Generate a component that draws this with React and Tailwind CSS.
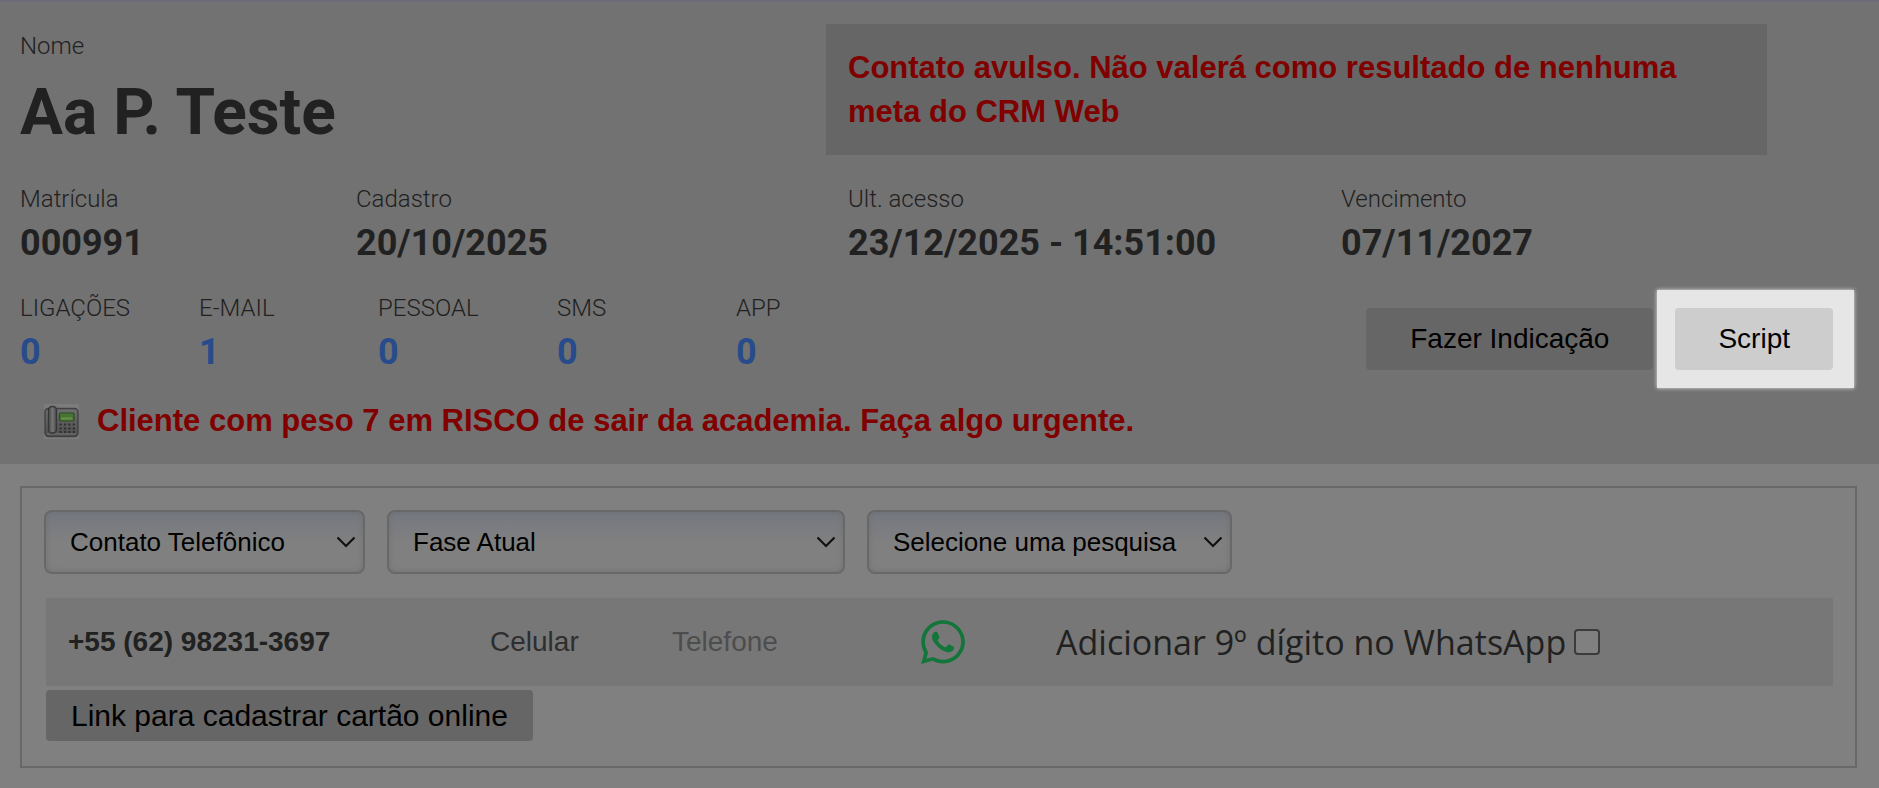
import React from 'react';
import { FaWhatsapp } from 'react-icons/fa';

const DETAILS = [
    { label: 'Matrícula', value: '000991' },
    { label: 'Cadastro', value: '20/10/2025' },
    { label: 'Ult. acesso', value: '23/12/2025 - 14:51:00' },
    { label: 'Vencimento', value: '07/11/2027' },
];

const COUNTERS = [
    { label: 'LIGAÇÕES', value: 0 },
    { label: 'E-MAIL', value: 1 },
    { label: 'PESSOAL', value: 0 },
    { label: 'SMS', value: 0 },
    { label: 'APP', value: 0 },
];

const PhoneIcon = () => (
    <svg viewBox="0 0 35 35" className="h-[35px] w-[35px] shrink-0" aria-hidden="true">
        <defs>
            <linearGradient id="phone-body" x1="0" y1="0" x2="0" y2="1">
                <stop offset="0" stopColor="#6e6e6e" />
                <stop offset="1" stopColor="#4e4e4e" />
            </linearGradient>
            <linearGradient id="phone-handset" x1="0" y1="0" x2="1" y2="0">
                <stop offset="0" stopColor="#4a4a4a" />
                <stop offset="0.5" stopColor="#747474" />
                <stop offset="1" stopColor="#4a4a4a" />
            </linearGradient>
        </defs>
        <rect width="35" height="35" fill="#7c7c7c" />
        <rect x="1" y="4.5" width="33" height="28" rx="3.5" fill="url(#phone-body)" stroke="#404040" strokeWidth="1.4" />
        <path d="M3 30h29" stroke="#767676" strokeWidth="1" />
        <rect x="4.5" y="2.5" width="8" height="26.5" rx="3.5" fill="url(#phone-handset)" stroke="#363636" strokeWidth="1.3" />
        <rect x="15.5" y="9" width="14.5" height="8" rx="1" fill="#477335" stroke="#2c4c22" strokeWidth="1.2" />
        <path d="M17 14.5h11.5" stroke="#638b46" strokeWidth="2.6" />
        {[20.5, 24.5, 28].map((y) => (
            <path key={y} d={`M15.5 ${y}h16`} stroke="#2f2f2f" strokeWidth="2" strokeDasharray="2.2 2.2" />
        ))}
    </svg>
);

const Field = ({ label, value, valueClass }) => (
    <div>
        <div className="text-2xl leading-8 font-light">{label}</div>
        <div className={`text-4xl leading-[56px] font-bold ${valueClass || ''}`}>{value}</div>
    </div>
);

const Select = ({ label, option, className }) => (
    <div className={`relative ${className}`}>
        <select
            aria-label={label}
            className="h-16 w-full appearance-none rounded-lg border-2 border-[#686868] bg-linear-to-b from-[#757881] to-[#808080] to-50% pr-10 pl-6 text-[26px] text-black shadow-[inset_0_0_6px_#707070]"
        >
            <option>{option}</option>
        </select>
        <svg viewBox="0 0 20 12" className="pointer-events-none absolute top-[26px] right-[9px] h-3 w-5" aria-hidden="true">
            <path d="M1.5 1.5 10 10l8.5-8.5" fill="none" stroke="#111" strokeWidth="2.2" />
        </svg>
    </div>
);

const Header = () => (
    <header className="border-t-2 border-[#6d6b77] bg-[#727272] pl-5 pb-[21px] font-[Roboto,sans-serif] text-[#212121]">
        <div className="grid grid-cols-[806fr_941fr_112fr] pt-[22px]">
            <div>
                <div className="pt-[6px] text-2xl leading-8 font-light">Nome</div>
                <h1 className="text-[64px] leading-[102px] font-bold">Aa P. Teste</h1>
            </div>
            <div className="self-start bg-[#666] px-[22px] pt-[22px] pb-[21px] font-['Liberation_Sans',Arial,sans-serif] text-[31px] leading-[44px] font-bold text-[#800000]">
                Contato avulso. Não valerá como resultado de nenhuma meta do CRM Web
            </div>
        </div>

        <div className="grid grid-cols-[336fr_492fr_493fr_538fr] pt-[19px]">
            {DETAILS.map((item) => (
                <Field key={item.label} {...item} />
            ))}
        </div>

        <div className="flex items-start justify-between pt-[19px] pr-[25px]">
            <div className="grid grid-cols-[repeat(5,179px)] pt-[2px]">
                {COUNTERS.map((item) => (
                    <Field key={item.label} {...item} valueClass="text-[#274b8b]" />
                ))}
            </div>
            <div className="flex items-center gap-1 font-['Liberation_Sans',Arial,sans-serif] text-[28px] text-black">
                <button type="button" className="h-[62px] rounded bg-[#666] px-11">
                    Fazer Indicação
                </button>
                {/* Passo atual do tour: só este botão fica iluminado */}
                <div className="bg-[#e6e6e6] py-[18px] pr-[21px] pl-[18px] shadow-[0_0_4px_#e6e6e6]">
                    <button type="button" className="h-[62px] rounded bg-[#cdcdcd] px-[43px]">
                        Script
                    </button>
                </div>
            </div>
        </div>

        <div className="flex items-center gap-[18px] pt-[11px] pl-6">
            <PhoneIcon />
            <p className="font-['Liberation_Sans',Arial,sans-serif] text-[31px] leading-[44px] font-bold text-[#800000]">
                Cliente com peso 7 em RISCO de sair da academia. Faça algo urgente.
            </p>
        </div>
    </header>
);

const App = () => {
    return (
        <div className="min-h-screen bg-[#808080] font-['Liberation_Sans',Arial,sans-serif]">
            <Header />

            <main className="mt-[22px] mr-[22px] ml-5 border-2 border-[#686868] px-[22px] pt-[22px] pb-[25px]">
                <div className="flex gap-[22px]">
                    <Select label="Tipo de contato" option="Contato Telefônico" className="w-[321px]" />
                    <Select label="Fase" option="Fase Atual" className="w-[458px]" />
                    <Select label="Pesquisa" option="Selecione uma pesquisa" className="w-[365px]" />
                </div>

                <div className="mt-6 ml-0.5 grid h-[88px] grid-cols-[422px_182px_246px_138px_1fr] items-center bg-[#777] pl-[22px] text-[28px] text-[#212121]">
                    <span className="font-bold">+55 (62) 98231-3697</span>
                    <span className="text-[#2e2e2e]">Celular</span>
                    <span className="text-[#4d4d4d]">Telefone</span>
                    <FaWhatsapp className="h-[50px] w-[50px] text-[#12753a]" />
                    <div className="flex items-center gap-2 font-['Open_Sans',sans-serif] text-[34px]">
                        <label htmlFor="nono-digito">Adicionar 9º dígito no WhatsApp</label>
                        <input
                            id="nono-digito"
                            type="checkbox"
                            className="h-[26px] w-[26px] appearance-none rounded border-2 border-[#3b3b3b] bg-[#808080]"
                        />
                    </div>
                </div>

                <button type="button" className="mt-1 ml-0.5 block h-[51px] rounded bg-[#666] px-[25px] text-[30px] leading-9 text-black">
                    Link para cadastrar cartão online
                </button>
            </main>
        </div>
    );
};

export default App;
